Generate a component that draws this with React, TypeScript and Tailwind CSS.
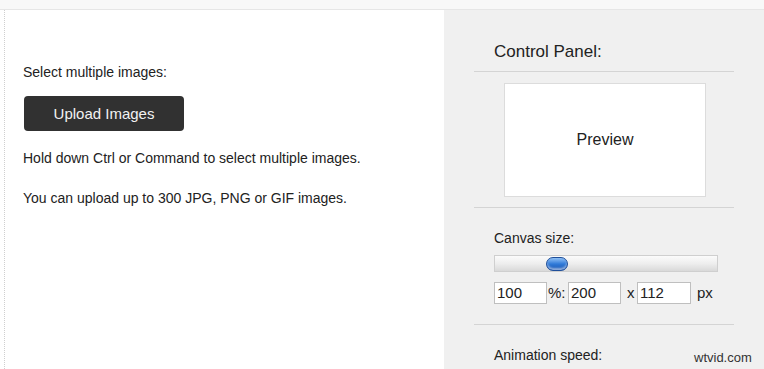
import React from 'react';

export default function App() {
  return (
    <div
      className="w-[764px] h-[369px] overflow-hidden bg-[#f8f8f8] text-[#222]"
      style={{ fontFamily: '"Liberation Sans", Arial, sans-serif' }}
    >
      <div className="h-[10px] bg-[#f8f8f8] border-b border-[#e6e6e6]" />
      <div className="flex h-[359px]">
        {/* Left column */}
        <div className="w-[5px] border-r border-dotted border-[#cfcfcf] bg-white" />
        <div className="w-[439px] bg-white pl-[18px] pt-[52px] text-[14px] leading-[20px]">
          <p>Select multiple images:</p>
          <button className="mt-[14px] ml-[1px] w-[160px] h-[35px] rounded-[4px] bg-[#313131] text-[#f2f2f2] text-[15px]">
            Upload Images
          </button>
          <p className="mt-[17px]">Hold down Ctrl or Command to select multiple images.</p>
          <p className="mt-[20px]">You can upload up to 300 JPG, PNG or GIF images.</p>
        </div>

        {/* Control panel */}
        <div className="w-[320px] bg-[#f0f0f0] relative">
          <div className="mx-[30px] pt-[31px]">
            <div className="pl-[20px] h-[31px] text-[17px] leading-[22px] border-b border-[#d4d4d4]">
              Control Panel:
            </div>
            <div className="h-[136px] flex items-start justify-center pt-[11px] pl-[2px] border-b border-[#d4d4d4]">
              <div className="w-[202px] h-[114px] bg-white border border-[#dcdcdc] flex items-center justify-center text-[16px]">
                Preview
              </div>
            </div>
            <div className="pl-[20px] pt-[21px] h-[117px] border-b border-[#d4d4d4] text-[14px]">
              <div className="leading-[18px]">Canvas size:</div>
              <div className="relative mt-[8px] w-[224px] h-[17px] border border-[#cfcfcf] bg-gradient-to-b from-[#fbfbfb] via-[#eeeeee] to-[#d9d9d9]">
                <div className="absolute left-[51px] top-[1px] w-[22px] h-[14px] rounded-full border border-[#1f4f9a] bg-gradient-to-b from-[#8fc0f5] via-[#2f7ad8] to-[#1b54b0] shadow-[inset_0_-2px_2px_rgba(255,255,255,0.5)]" />
              </div>
              <div className="mt-[10px] flex items-center h-[22px] text-[15px]">
                <div className="w-[53px] h-[22px] bg-white border border-[#bfbfbf] pl-[2px] leading-[20px]">100</div>
                <span className="ml-[1px] w-[20px]">%:</span>
                <div className="w-[53px] h-[22px] bg-white border border-[#bfbfbf] pl-[2px] leading-[20px]">200</div>
                <span className="ml-[6px] w-[9px]">x</span>
                <div className="ml-[1px] w-[54px] h-[22px] bg-white border border-[#bfbfbf] pl-[2px] leading-[20px]">112</div>
                <span className="ml-[6px]">px</span>
              </div>
            </div>
            <div className="pl-[20px] pt-[21px] text-[14px] leading-[18px]">Animation speed:</div>
          </div>
          <span className="absolute left-[250px] top-[340px] text-[13px] leading-[16px] text-[#333]">wtvid.com</span>
        </div>
      </div>
    </div>
  );
}
